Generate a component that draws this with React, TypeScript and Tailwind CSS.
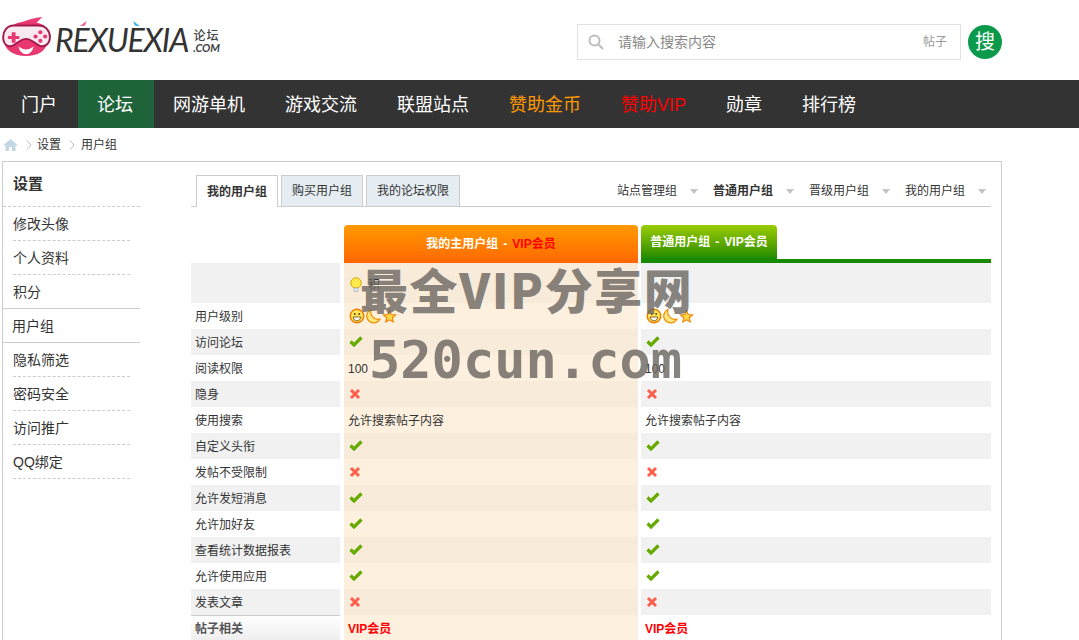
import type { ReactNode } from 'react'

const FONT = "font-['Liberation_Sans','Noto_Sans_CJK_SC',sans-serif]"

const NAV = [
  { label: '门户', className: 'text-white pl-5 pr-[21px]' },
  { label: '论坛', className: 'text-white bg-[#1f633b] pl-[19px] pr-[21px]' },
  { label: '网游单机', className: 'text-white pl-[19px] pr-5' },
  { label: '游戏交流', className: 'text-white px-5' },
  { label: '联盟站点', className: 'text-white px-5' },
  { label: '赞助金币', className: 'text-[#ff9900] px-5' },
  { label: '赞助VIP', className: 'text-[#ff0000] px-5' },
  { label: '勋章', className: 'text-white px-5' },
  { label: '排行榜', className: 'text-white px-5' },
]

const SIDE_TOP = ['修改头像', '个人资料', '积分']
const SIDE_BOTTOM = ['隐私筛选', '密码安全', '访问推广', 'QQ绑定']

type Cell = 'yes' | 'no' | 'level' | string

const ROWS: { label: string; cell: Cell }[] = [
  { label: '用户级别', cell: 'level' },
  { label: '访问论坛', cell: 'yes' },
  { label: '阅读权限', cell: '100' },
  { label: '隐身', cell: 'no' },
  { label: '使用搜索', cell: '允许搜索帖子内容' },
  { label: '自定义头衔', cell: 'yes' },
  { label: '发帖不受限制', cell: 'no' },
  { label: '允许发短消息', cell: 'yes' },
  { label: '允许加好友', cell: 'yes' },
  { label: '查看统计数据报表', cell: 'yes' },
  { label: '允许使用应用', cell: 'yes' },
  { label: '发表文章', cell: 'no' },
]

function Check() {
  return (
    <svg width="14" height="12" viewBox="0 0 14 12" className="mt-[-4px] ml-px">
      <path d="M1.5 6.5 L5 10 L12.5 2.5" fill="none" stroke="#66aa00" strokeWidth="3.2" />
    </svg>
  )
}

function Cross() {
  return (
    <svg width="12" height="12" viewBox="0 0 12 12" className="ml-px mt-[-1px]">
      <path d="M2 2 L10 10 M10 2 L2 10" fill="none" stroke="#ff5f4a" strokeWidth="3" />
    </svg>
  )
}

function Level() {
  return (
    <svg width="48" height="16" viewBox="0 0 48 16" className="ml-px mt-[-2px]">
      <circle cx="8" cy="8" r="6.8" fill="#ffe45c" stroke="#f08000" strokeWidth="1.5" />
      <circle cx="5.8" cy="6" r="1" fill="#6b4a00" />
      <circle cx="10.2" cy="6" r="1" fill="#6b4a00" />
      <path d="M4 9 H12 Q11 13 8 13 Q5 13 4 9 Z" fill="#fff" stroke="#6b4a00" strokeWidth="0.8" />
      <path
        d="M22 1.5 A7 7 0 1 0 31 11 A7.5 7.5 0 0 1 22 1.5 Z"
        fill="#ffe680"
        stroke="#f09000"
        strokeWidth="1.2"
      />
      <path
        d="M40.5 2.5 L42.3 6.6 L46.6 7 L43.3 9.8 L44.3 14 L40.5 11.8 L36.7 14 L37.7 9.8 L34.4 7 L38.7 6.6 Z"
        fill="#ffd84a"
        stroke="#f08000"
        strokeWidth="1.1"
      />
    </svg>
  )
}

function CellContent({ cell }: { cell: Cell }) {
  if (cell === 'yes') return <Check />
  if (cell === 'no') return <Cross />
  if (cell === 'level') return <Level />
  return <span>{cell}</span>
}

function Bulb() {
  return (
    <svg width="12" height="16" viewBox="0 0 12 16">
      <circle cx="6" cy="6" r="5.2" fill="#ffe94d" stroke="#d9a800" strokeWidth="1" />
      <rect x="4" y="11" width="4" height="3.5" fill="#dfe6ee" stroke="#9aa6b2" strokeWidth="0.6" />
    </svg>
  )
}

function Row({
  gray,
  label,
  left,
  right,
  className = 'h-[26px]',
}: {
  gray: boolean
  label: ReactNode
  left: ReactNode
  right: ReactNode
  className?: string
}) {
  return (
    <div className={`flex gap-[3px] ${className}`}>
      <div className={`w-[149px] mr-px flex items-center pl-[4px] pt-px ${gray ? 'bg-[#f1f1f1]' : 'bg-white'}`}>{label}</div>
      <div className={`w-[294px] flex items-center pl-[4px] pt-px ${gray ? 'bg-[#f9ebd9]' : 'bg-[#fdf0df]'}`}>{left}</div>
      <div className={`w-[350px] flex items-center pl-[4px] pt-px ${gray ? 'bg-[#f1f1f1]' : 'bg-white'}`}>{right}</div>
    </div>
  )
}

function Logo() {
  return (
    <div className="flex items-center pl-[2px] w-[240px]">
      <svg width="50" height="42" viewBox="0 0 52 44" className="shrink-0 mt-[-7px]">
        <path d="M20 7 Q30 2 42 1 L36 7 Q42 8 45 11 L20 11 Z" fill="#ec3d78" />
        <path
          d="M25 6 C38 6 47 14 47 26 C47 37 37 42 25 42 C12 42 2 36 2 25 C2 14 12 6 25 6 Z"
          fill="#e8386f"
        />
        <path
          d="M12 10 H38 C46 10 50 16 50 22 C50 30 44 33 39 31 C34 29 31 24 25 24 C19 24 16 29 11 31 C6 33 1 30 1 22 C1 16 5 10 12 10 Z"
          fill="#f9e9f1"
          stroke="#a3184d"
          strokeWidth="2"
        />
        <path d="M10 17 H14 V21 H18 V24 H14 V28 H10 V24 H6 V21 H10 Z" fill="#e8386f" />
        <circle cx="40" cy="17" r="2.2" fill="#e8386f" />
        <circle cx="35" cy="21.5" r="2.2" fill="#e8386f" />
        <circle cx="45" cy="21.5" r="2.2" fill="#e8386f" />
        <circle cx="40" cy="26" r="2.2" fill="#e8386f" />
        <path d="M17 32 Q25 38 33 32 Q31 40 25 40 Q19 40 17 32 Z" fill="#fff" />
      </svg>
      <div className="relative ml-[3px]">
        <span className="font-['Lato',sans-serif] italic text-[32px] leading-none tracking-[-1.2px] text-[#333]">
          REXUEXIA
        </span>
        <svg width="9" height="6" viewBox="0 0 10 8" className="absolute left-[24px] top-[-3px]">
          <path d="M0 7 L9 0 L7 6 Z" fill="#f0558c" />
        </svg>
        <svg width="8" height="6" viewBox="0 0 10 8" className="absolute left-[78px] top-[-3px]">
          <path d="M0 0 L9 7 L2 6 Z" fill="#2bb0ee" />
        </svg>
      </div>
      <div className="ml-[5px] mt-[3px] flex flex-col items-center leading-none text-[#444]">
        <span className="text-[12px] font-medium tracking-[1px]">论坛</span>
        <span className="font-['Lato',sans-serif] italic text-[11px] font-bold">.COM</span>
      </div>
    </div>
  )
}

export default function App() {
  return (
    <div className={`${FONT} relative h-[640px] overflow-hidden bg-white text-[12px] text-[#333]`}>
      <header className="flex h-[80px] items-center">
        <Logo />
        <div className="ml-[337px] mt-[4px] flex h-[36px] w-[384px] items-center border border-[#e2e2e2] pl-[10px] pr-[13px]">
          <svg width="16" height="16" viewBox="0 0 16 16" fill="none" stroke="#bdbdbd" strokeWidth="2">
            <circle cx="6.5" cy="6.5" r="5" />
            <path d="M10.5 10.5 L15 15" />
          </svg>
          <input
            placeholder="请输入搜索内容"
            className="ml-[14px] flex-1 bg-transparent text-[14px] outline-none placeholder:text-[#888]"
          />
          <span className="text-[12px] text-[#999]">帖子</span>
        </div>
        <button
          type="button"
          className="ml-[7px] mt-[4px] flex h-[34px] w-[34px] items-center justify-center rounded-full bg-[#0b9a4b] text-[20px] text-white"
        >
          搜
        </button>
      </header>

      <nav className="flex h-[48px] bg-[#333333] pl-px">
        {NAV.map((item) => (
          <a key={item.label} className={`flex items-center pt-[2px] text-[18px] ${item.className}`}>
            {item.label}
          </a>
        ))}
      </nav>

      <div className="flex h-[33px] items-center pl-[3px] text-[12px]">
        <svg width="15" height="12" viewBox="0 0 15 12">
          <path d="M7.5 0 L15 6.5 H12.5 V12 H9 V8 H6 V12 H2.5 V6.5 H0 Z" fill="#c3d6e4" />
        </svg>
        <svg width="6" height="10" viewBox="0 0 6 10" className="ml-[8px]" fill="none" stroke="#bbb">
          <path d="M1 0.5 L5 5 L1 9.5" />
        </svg>
        <span className="ml-[5px]">设置</span>
        <svg width="6" height="10" viewBox="0 0 6 10" className="ml-[8px]" fill="none" stroke="#bbb">
          <path d="M1 0.5 L5 5 L1 9.5" />
        </svg>
        <span className="ml-[6px]">用户组</span>
      </div>

      <div className="ml-[2px] flex h-[600px] w-[1000px] border border-[#cccccc]">
        <aside className="w-[137px] shrink-0">
          <div className="flex h-[45px] items-center border-b border-dashed border-[#cccccc] pl-[10px] text-[15px] font-bold">
            设置
          </div>
          {SIDE_TOP.map((item, i) => (
            <div key={item} className="ml-[10px] mr-[10px]">
              <div
                className={`flex items-center pt-px text-[14px] ${
                  i < 2 ? 'h-[34px] border-b border-dashed border-[#cccccc]' : 'h-[33px]'
                }`}
              >
                {item}
              </div>
            </div>
          ))}
          <div className="flex h-[35px] items-center border-y border-[#cccccc] pl-[9px] pt-px text-[14px]">用户组</div>
          {SIDE_BOTTOM.map((item) => (
            <div
              key={item}
              className="ml-[10px] mr-[10px] flex h-[34px] items-center border-b border-dashed border-[#cccccc] pt-px text-[14px]"
            >
              {item}
            </div>
          ))}
        </aside>

        <main className="ml-[51px] w-[800px]">
          <div className="mt-[13px] flex h-[32px] items-end justify-between border-b border-[#cccccc] pl-[5px]">
            <div className="flex gap-[3px]">
              <div className="mb-[-1px] flex h-[32px] w-[82px] items-center justify-center border border-b-0 border-[#cccccc] bg-white font-bold">
                我的用户组
              </div>
              <div className="flex h-[31px] w-[82px] items-center justify-center border border-b-0 border-[#cccccc] bg-[#e5edf2]">
                购买用户组
              </div>
              <div className="flex h-[31px] w-[94px] items-center justify-center border border-b-0 border-[#cccccc] bg-[#e5edf2]">
                我的论坛权限
              </div>
            </div>
            <div className="flex h-[30px] items-center">
              {['站点管理组', '普通用户组', '晋级用户组', '我的用户组'].map((item, i) => (
                <div key={item} className="flex w-[96px] items-center last:w-[86px]">
                  <span className={i === 1 ? 'font-bold' : ''}>{item}</span>
                  <span className="ml-[13px] h-0 w-0 border-x-[4px] border-t-[5px] border-x-transparent border-t-[#c4c4c4]" />
                </div>
              ))}
            </div>
          </div>

          <div className="mt-[18px] flex h-[38px] gap-[3px]">
            <div className="ml-[153px] flex w-[294px] items-center justify-center rounded-t-[4px] bg-gradient-to-b from-[#ff9900] to-[#ff6600] font-bold text-white">
              我的主用户组<span className="mx-[5px]">-</span>
              <span className="text-[#ff0000]">VIP会员</span>
            </div>
            <div className="flex flex-1 items-start border-b-4 border-[#168a00]">
              <div className="flex h-[34px] w-[136px] items-center justify-center rounded-t-[4px] bg-gradient-to-b from-[#99cc00] to-[#168a00] font-bold text-white">
                普通用户组<span className="mx-[5px]">-</span>VIP会员
              </div>
            </div>
          </div>

          <Row
            gray
            className="h-[40px]"
            label=""
            left={
              <div className="ml-[2px] mt-[2px] flex items-center gap-[6px]">
                <Bulb />
                <span>积</span>
              </div>
            }
            right=""
          />
          {ROWS.map((row, i) => (
            <Row
              key={row.label}
              gray={i % 2 === 1}
              label={row.label}
              left={<CellContent cell={row.cell} />}
              right={<CellContent cell={row.cell} />}
            />
          ))}
          <Row
            gray={false}
            label={
              <div className="-ml-[4px] -mt-px flex h-[26px] w-[149px] items-center border-t border-[#cccccc] bg-gradient-to-b from-white to-[#eeeeee] pl-[4px] font-bold text-[#555]">
                帖子相关
              </div>
            }
            left={<span className="font-bold text-[#ff0000]">VIP会员</span>}
            right={<span className="font-bold text-[#ff0000]">VIP会员</span>}
          />
        </main>
      </div>

      {/* 水印 */}
      <div className="pointer-events-none absolute left-[360px] top-[256px] whitespace-nowrap font-['Noto_Sans_CJK_SC',sans-serif] text-[48px] font-black leading-[64px] tracking-[1.6px] text-[#69645f]/80">
        最全VIP分享网
      </div>
      <div className="pointer-events-none absolute left-[369px] top-[328px] whitespace-nowrap font-['DejaVu_Sans_Mono',monospace] text-[52px] font-bold leading-[64px] text-[#69645f]/80">
        520cun.com
      </div>
    </div>
  )
}
